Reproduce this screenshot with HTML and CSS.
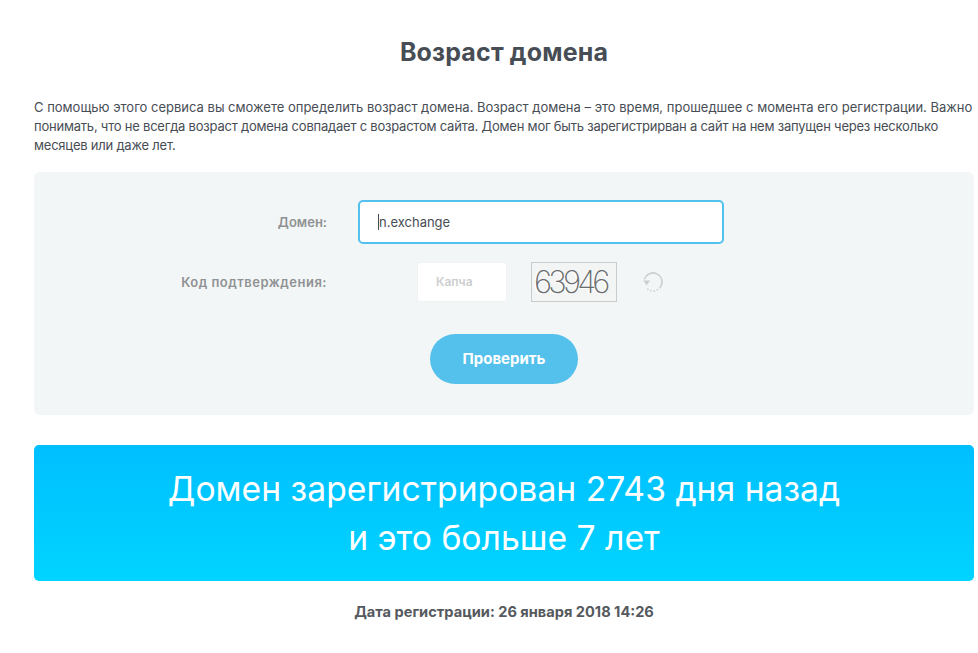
FILE: index.html
```html
<!DOCTYPE html>
<html lang="ru">
<head>
  <meta charset="UTF-8">
  <title>Возраст домена</title>
  <link rel="stylesheet" href="styles.css">
</head>
<body>
  <div class="container">
    <h1>Возраст домена</h1>
    <p class="intro">
      <span class="line">С помощью этого сервиса вы сможете определить возраст домена. Возраст домена – это время, прошедшее с момента его регистрации. Важно</span>
      <span class="line line-tight">понимать, что не всегда возраст домена совпадает с возрастом сайта. Домен мог быть зарегистрирван а сайт на нем запущен через несколько</span>
      <span class="line line-tight">месяцев или даже лет.</span>
    </p>

    <form class="check-form">
      <div class="row">
        <label class="row-label" for="domain">Домен:</label>
        <div class="domain-box">
          <span class="caret"></span>
          <span class="domain-value" id="domain">n.exchange</span>
        </div>
      </div>
      <div class="row row-captcha">
        <label class="row-label" for="captcha">Код подтверждения:</label>
        <div class="captcha-input" id="captcha">Капча</div>
        <div class="captcha-img">63946</div>
        <svg class="reload" width="24" height="24" viewBox="0 0 24 24" fill="none">
          <path d="M3.4 9.4A9 9 0 1 1 19.4 17.1" stroke="#c9d0d2" stroke-width="1.5"/>
          <path d="M19.4 17.1A9 9 0 0 1 5.6 18.3" stroke="#c9d0d2" stroke-width="1.5" stroke-dasharray="1.5 1.8"/>
          <path d="M2.2 10.6h7l-3.5 4.6z" fill="#c9d0d2"/>
        </svg>
      </div>
      <div class="actions">
        <button type="button" class="btn">Проверить</button>
      </div>
    </form>

    <div class="result">Домен зарегистрирован 2743 дня назад<br>и это больше 7 лет</div>
    <p class="reg-date">Дата регистрации: 26 января 2018 14:26</p>
  </div>
</body>
</html>
```

FILE: styles.css
```css
* {
  box-sizing: border-box;
}
body {
  margin: 0;
  background: #fff;
  font-family: "Inter", "DejaVu Sans", sans-serif;
  color: #474d54;
}
.container {
  padding: 0 4px 0 34px;
}
h1 {
  margin: 0;
  padding-top: 37px;
  font-size: 25px;
  line-height: 30px;
  font-weight: 700;
  letter-spacing: 0.15px;
  text-align: center;
}
.intro {
  margin: 31px 0 0;
  font-size: 13px;
  line-height: 19px;
}
.line {
  display: block;
  white-space: nowrap;
}
.line-tight {
  letter-spacing: -0.22px;
}
.check-form {
  margin-top: 17px;
  height: 243px;
  padding-top: 28px;
  background: #f3f6f7;
  border-radius: 6px;
}
.row {
  display: flex;
  align-items: center;
}
.row-captcha {
  margin-top: 18px;
}
.row-label {
  width: 293px;
  font-size: 13px;
  font-weight: 600;
  text-align: right;
  color: #8f9294;
}
.row-captcha .row-label {
  letter-spacing: 0.5px;
}
.domain-box {
  display: flex;
  align-items: center;
  width: 366px;
  height: 44px;
  margin-left: 31px;
  padding-left: 18px;
  background: #fff;
  border: 2px solid #54c1ec;
  border-radius: 5px;
  font-size: 13px;
}
.caret {
  width: 1px;
  height: 16px;
  background: #474d54;
}
.captcha-input {
  width: 90px;
  height: 40px;
  margin-left: 90px;
  padding-left: 18px;
  background: #fff;
  border: 1px solid #f0f2f3;
  border-radius: 2px;
  font-size: 12px;
  font-weight: 600;
  line-height: 37px;
  color: #ccced0;
}
.captcha-img {
  width: 86px;
  height: 40px;
  margin-left: 24px;
  padding-left: 2px;
  background: #f3f5f5;
  border: 1px solid #c9cccd;
  font-size: 31px;
  font-weight: 200;
  line-height: 38px;
  color: #6a6d6f;
  text-shadow: -1.5px 1px 0 #fff;
  letter-spacing: -3.8px;
  overflow: hidden;
}
.reload {
  margin-left: 24px;
}
.actions {
  display: flex;
  justify-content: center;
  margin-top: 32px;
}
.btn {
  width: 148px;
  height: 50px;
  padding: 0 0 2px;
  border: 0;
  border-radius: 25px;
  background: #54c1ec;
  color: #fff;
  font-family: inherit;
  font-size: 15px;
  font-weight: 700;
}
.result {
  margin-top: 30px;
  height: 136px;
  padding-top: 19px;
  border-radius: 5px;
  background: linear-gradient(#00bfff, #00d4ff);
  color: #fff;
  font-size: 33.7px;
  line-height: 49px;
  text-align: center;
}
.reg-date {
  margin: 22px 0 0;
  font-size: 14.6px;
  font-weight: 700;
  text-align: center;
  color: #55595e;
}
```
